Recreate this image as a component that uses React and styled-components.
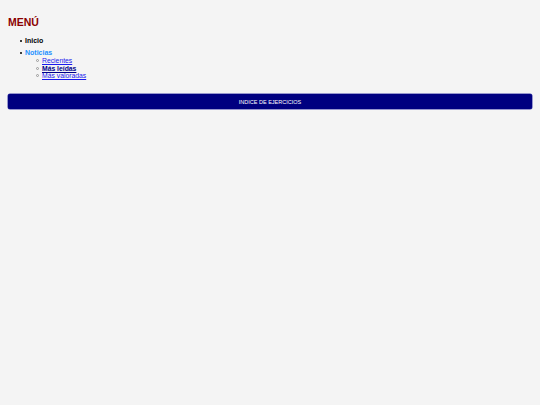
import React from 'react';
import styled, { createGlobalStyle } from 'styled-components';

const GlobalStyle = createGlobalStyle`
  html, body {
    margin: 0;
    padding: 0;
    background: #f4f4f4;
    font-family: "Liberation Sans", Arial, sans-serif;
  }
`;

const Page = styled.div`
  padding: 0 8px;
  min-height: 405px;
  box-sizing: border-box;
`;

const Title = styled.h1`
  margin: 16px 0 0;
  font-size: 10.5px;
  line-height: 13px;
  font-weight: bold;
  color: #8b0000;
`;

const Menu = styled.ul`
  margin: 8px 0 0;
  padding-left: 17px;
  list-style: none;
  font-size: 7px;
  line-height: 8px;
`;

const Item = styled.li`
  font-weight: bold;
  color: ${p => (p.$active ? '#1e90ff' : '#000')};
  margin-bottom: ${p => (p.$last ? 0 : '4px')};

  &::before {
    content: '';
    display: inline-block;
    width: 2px;
    height: 2px;
    margin: 0 3px 1px -5px;
    border-radius: 50%;
    background: #000;
    vertical-align: middle;
  }
`;

const SubMenu = styled.ul`
  margin: 0;
  padding-left: 17px;
  list-style: none;
  font-size: 6.8px;
  line-height: 7.5px;
`;

const SubItem = styled.li`
  &::before {
    content: '';
    box-sizing: border-box;
    display: inline-block;
    width: 3px;
    height: 3px;
    margin: 0 3px 1px -6px;
    border-radius: 50%;
    border: 0.6px solid #999;
    vertical-align: middle;
  }
`;

const SubLink = styled.a`
  color: ${p => (p.$current ? '#00008b' : '#1a1aee')};
  font-weight: ${p => (p.$current ? 'bold' : 'normal')};
  text-decoration: underline;
`;

const IndexButton = styled.a`
  display: flex;
  align-items: center;
  justify-content: center;
  margin-top: 14.5px;
  height: 15px;
  background: #000080;
  border-radius: 2px;
  box-shadow: 0 0 0 0.5px #3a3aa8;
  color: #fff;
  font-size: 5.5px;
  text-decoration: none;
`;

const subItems = [
  { label: 'Recientes' },
  { label: 'Más leídas', current: true },
  { label: 'Más valoradas' },
];

export default function App() {
  return (
    <>
      <GlobalStyle />
      <Page>
        <Title>MENÚ</Title>
        <Menu>
          <Item>Inicio</Item>
          <Item $active $last>
            Noticias
            <SubMenu>
              {subItems.map(item => (
                <SubItem key={item.label}>
                  <SubLink href="#" $current={item.current}>{item.label}</SubLink>
                </SubItem>
              ))}
            </SubMenu>
          </Item>
        </Menu>
        <IndexButton href="#">INDICE DE EJERCICIOS</IndexButton>
      </Page>
    </>
  );
}
